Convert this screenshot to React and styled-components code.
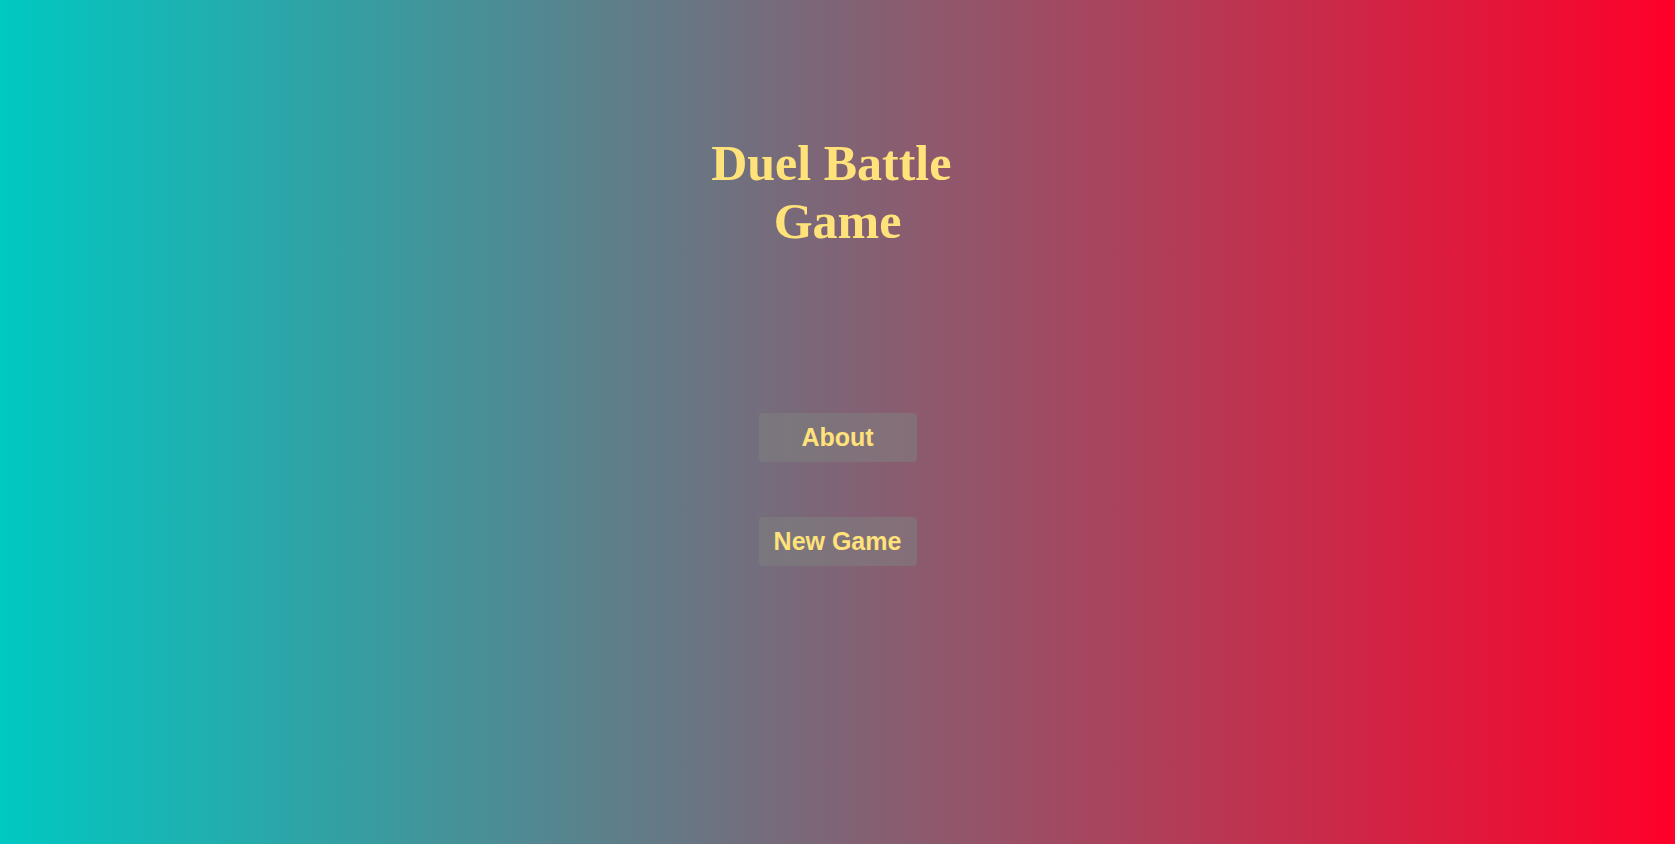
import styled, { createGlobalStyle } from "styled-components";

const GlobalStyle = createGlobalStyle`
  html, body {
    margin: 0;
    padding: 0;
    height: 100%;
  }
  #root {
    height: 100%;
  }
`;

const Screen = styled.div`
  min-height: 844px;
  height: 100%;
  background: linear-gradient(to right, #00c8c2, #ff0029);
  display: flex;
  flex-direction: column;
  align-items: center;
`;

const Title = styled.h1`
  margin: 134px 0 0 0;
  width: 260px;
  text-align: center;
  white-space: break-spaces;
  font-family: "Liberation Serif", "Times New Roman", serif;
  font-weight: 700;
  font-size: 50px;
  line-height: 58px;
  color: #ffe27a;
`;

const Menu = styled.div`
  display: flex;
  flex-direction: column;
  align-items: center;
  gap: 55px;
  margin-top: 163px;
`;

const MenuButton = styled.button`
  width: 158px;
  height: 49px;
  border: none;
  border-radius: 4px;
  background: rgba(128, 128, 128, 0.55);
  color: #ffe27a;
  font-family: "Liberation Sans", Arial, sans-serif;
  font-weight: 700;
  font-size: 25px;
  cursor: pointer;
  padding: 0;
`;

const App = () => {
  return (
    <>
      <GlobalStyle />
      <Screen>
        <Title>Duel Battle Game</Title>
        <Menu>
          <MenuButton>About</MenuButton>
          <MenuButton>New Game</MenuButton>
        </Menu>
      </Screen>
    </>
  );
};

export default App;
